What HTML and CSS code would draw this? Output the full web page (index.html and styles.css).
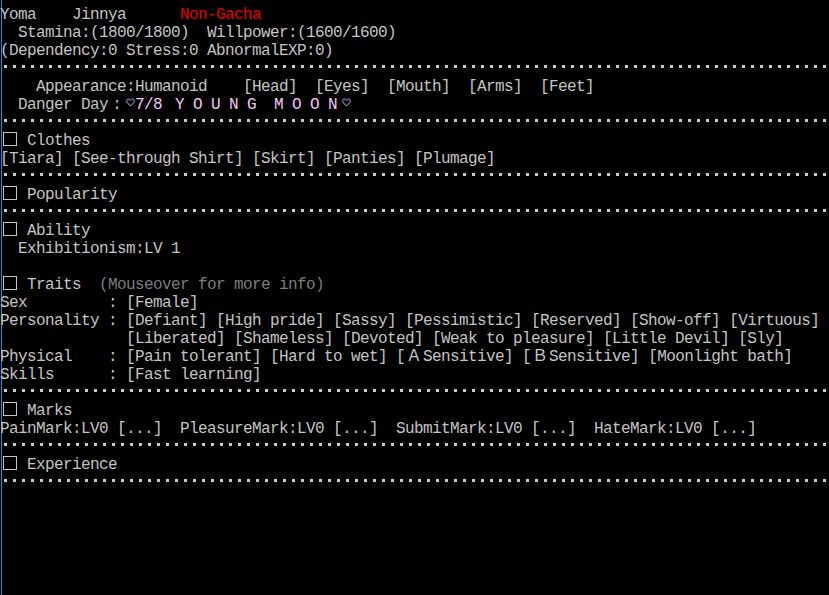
FILE: index.html
```html
<!DOCTYPE html>
<html lang="en">
<head>
<meta charset="utf-8">
<title>Status</title>
<link rel="stylesheet" href="styles.css">
</head>
<body>
<div class="screen">
<div class="row">Yoma    Jinnya      <span class="red">Non-Gacha</span></div>
<div class="row">  Stamina:(1800/1800)  Willpower:(1600/1600)</div>
<div class="row">(Dependency:0 Stress:0 AbnormalEXP:0)</div>
<div class="rule"></div>
<div class="row">    Appearance:Humanoid    [Head]  [Eyes]  [Mouth]  [Arms]  [Feet]</div>
<div class="row">  Danger Day<span class="fw">:</span><span class="heart"><svg width="9" height="9" viewBox="0 0 9 9"><path class="hb" d="M4.5 8 L1.2 4.6 C0.2 3.5 0.4 1.6 1.8 1.1 C3 0.7 3.9 1.4 4.5 2.4 C5.1 1.4 6 0.7 7.2 1.1 C8.6 1.6 8.8 3.5 7.8 4.6 Z"/><path class="ho" d="M4.5 8 L1.2 4.6 C0.2 3.5 0.4 1.6 1.8 1.1 C3 0.7 3.9 1.4 4.5 2.4 C5.1 1.4 6 0.7 7.2 1.1 C8.6 1.6 8.8 3.5 7.8 4.6 Z"/></svg></span><span class="pink">7/8 <span class="wide">YOUNG</span> <span class="wide">MOON</span></span><span class="heart"><svg width="9" height="9" viewBox="0 0 9 9"><path class="hb" d="M4.5 8 L1.2 4.6 C0.2 3.5 0.4 1.6 1.8 1.1 C3 0.7 3.9 1.4 4.5 2.4 C5.1 1.4 6 0.7 7.2 1.1 C8.6 1.6 8.8 3.5 7.8 4.6 Z"/><path class="ho" d="M4.5 8 L1.2 4.6 C0.2 3.5 0.4 1.6 1.8 1.1 C3 0.7 3.9 1.4 4.5 2.4 C5.1 1.4 6 0.7 7.2 1.1 C8.6 1.6 8.8 3.5 7.8 4.6 Z"/></svg></span></div>
<div class="rule"></div>
<div class="row"><span class="box"></span> Clothes</div>
<div class="row">[Tiara] [See-through Shirt] [Skirt] [Panties] [Plumage]</div>
<div class="rule"></div>
<div class="row"><span class="box"></span> Popularity</div>
<div class="rule"></div>
<div class="row"><span class="box"></span> Ability</div>
<div class="row">  Exhibitionism:LV 1</div>
<div class="row"></div>
<div class="row"><span class="box"></span> Traits  <span class="dim">(Mouseover for more info)</span></div>
<div class="row">Sex         : [Female]</div>
<div class="row">Personality : [Defiant] [High pride] [Sassy] [Pessimistic] [Reserved] [Show-off] [Virtuous]</div>
<div class="row">              [Liberated] [Shameless] [Devoted] [Weak to pleasure] [Little Devil] [Sly]</div>
<div class="row">Physical    : [Pain tolerant] [Hard to wet] [<span class="fwa">Ａ</span>Sensitive] [<span class="fwa">Ｂ</span>Sensitive] [Moonlight bath]</div>
<div class="row">Skills      : [Fast learning]</div>
<div class="rule"></div>
<div class="row"><span class="box"></span> Marks</div>
<div class="row">PainMark:LV0 [...]  PleasureMark:LV0 [...]  SubmitMark:LV0 [...]  HateMark:LV0 [...]</div>
<div class="rule"></div>
<div class="row"><span class="box"></span> Experience</div>
<div class="rule"></div>
</div>
</body>
</html>
```

FILE: styles.css
```css
html {
  background: #000;
}

body {
  margin: 0;
  min-height: 100vh;
  background: linear-gradient(to right, #000 1px, #2f86cc 1px, #2f86cc 2px, transparent 2px) #000;
  color: #c4c4c4;
  font-family: "Liberation Mono", "DejaVu Sans Mono", monospace;
  font-size: 16px;
  letter-spacing: -0.6px;
}

.screen {
  padding-top: 6px;
}

.row {
  height: 18px;
  line-height: 18px;
  white-space: pre;
}

.rule {
  height: 18px;
  background-image: linear-gradient(to right, #cacaca 3px, transparent 3px);
  background-size: 9px 3px;
  background-repeat: repeat-x;
  background-position: 4px 5px;
}

.red {
  color: #e80000;
}

.dim {
  color: #7c7c7c;
}

.pink {
  color: #f6c6f6;
}

.wide {
  letter-spacing: 8.4px;
  padding-left: 4px;
  margin-right: -4px;
}

.fw {
  display: inline-block;
  width: 18px;
  text-align: center;
  letter-spacing: 0;
}

.fwa {
  display: inline-block;
  width: 18px;
  height: 18px;
  text-align: center;
  letter-spacing: 0;
  font-family: "Noto Sans CJK JP", "Noto Sans", sans-serif;
  font-size: 16px;
  line-height: 12.7px;
  vertical-align: top;
}

.heart {
  display: inline-block;
  width: 9px;
  letter-spacing: 0;
}

.heart svg {
  display: inline-block;
  vertical-align: 2px;
  overflow: visible;
}

.hb {
  fill: none;
  stroke: #4a78ff;
  stroke-width: 0.9;
  transform: translateX(-0.35px);
}

.ho {
  fill: none;
  stroke: #f0a070;
  stroke-width: 0.6;
  transform: translateX(0.35px);
}

.box {
  display: inline-block;
  box-sizing: border-box;
  width: 14px;
  height: 14px;
  margin: 0 1px 0 3px;
  border: 1px solid #c4c4c4;
  vertical-align: top;
}
```
